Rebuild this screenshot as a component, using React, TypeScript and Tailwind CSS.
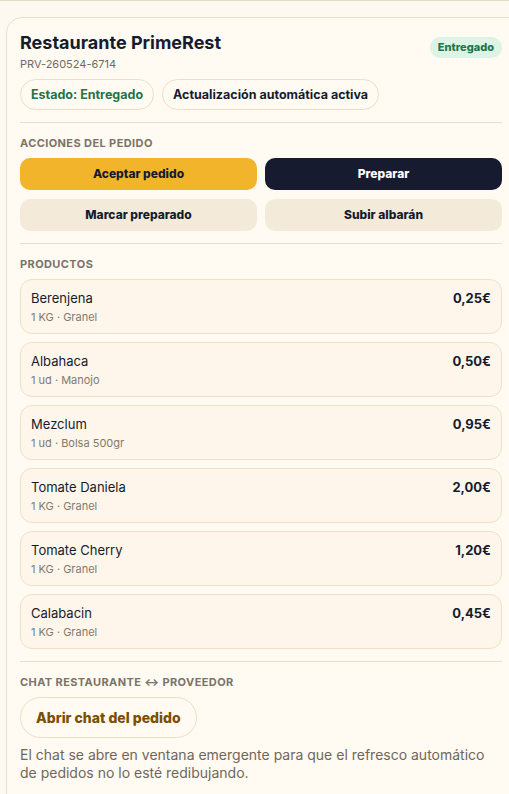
import React from 'react';

const products = [
  { name: 'Berenjena', detail: '1 KG · Granel', price: '0,25€' },
  { name: 'Albahaca', detail: '1 ud · Manojo', price: '0,50€' },
  { name: 'Mezclum', detail: '1 ud · Bolsa 500gr', price: '0,95€' },
  { name: 'Tomate Daniela', detail: '1 KG · Granel', price: '2,00€' },
  { name: 'Tomate Cherry', detail: '1 KG · Granel', price: '1,20€' },
  { name: 'Calabacin', detail: '1 KG · Granel', price: '0,45€' },
];

export default function App() {
  return (
    <div
      className="h-[794px] w-[509px] overflow-hidden bg-[#fdf8f0] border-t border-[#e9dcc4] font-['Inter','Noto_Sans',sans-serif] text-[#161b2e]"
    >
      <div className="ml-[6px] mt-[16px] w-[510px] rounded-tl-[16px] border border-[#eadfca] bg-[#fffaf2] px-[13px] pt-[13px] pb-6">
        {/* header */}
        <div className="flex items-start justify-between">
          <div>
            <h1 className="text-[18px] font-bold leading-[24px]">Restaurante PrimeRest</h1>
            <p className="mt-[2px] text-[11px] leading-[14px] text-[#6f6a63]">PRV-260524-6714</p>
          </div>
          <span className="mt-[6px] rounded-full bg-[#dcf3e6] px-[8px] py-[4px] text-[11px] font-extrabold leading-[13px] text-[#23734b]">
            Entregado
          </span>
        </div>

        <div className="mt-[8px] flex gap-2">
          <span className="rounded-full border border-[#ecdfc7] px-[10px] py-[7px] text-[12.5px] font-bold leading-[15px] text-[#23734b]">
            Estado: Entregado
          </span>
          <span className="rounded-full border border-[#ecdfc7] px-[10px] py-[7px] text-[12.5px] font-bold leading-[15px]">
            Actualización automática activa
          </span>
        </div>

        <div className="mt-3 border-t border-[#ebdfc9]" />

        {/* acciones */}
        <h2 className="mt-[13px] text-[11px] font-bold uppercase leading-[14px] tracking-[0.4px] text-[#7b7368]">Acciones del pedido</h2>
        <div className="mt-2 grid grid-cols-2 gap-2">
          <button className="h-[32px] rounded-[10px] bg-[#f2b42b] text-[12px] font-extrabold">Aceptar pedido</button>
          <button className="h-[32px] rounded-[10px] bg-[#171b2f] text-[12px] font-extrabold text-white">Preparar</button>
          <button className="mt-[1px] h-[32px] rounded-[10px] bg-[#f3eada] text-[12px] font-extrabold">Marcar preparado</button>
          <button className="mt-[1px] h-[32px] rounded-[10px] bg-[#f3eada] text-[12px] font-extrabold">Subir albarán</button>
        </div>

        <div className="mt-3 border-t border-[#ebdfc9]" />

        {/* productos */}
        <h2 className="mt-[13px] text-[11px] font-bold uppercase leading-[14px] tracking-[0.4px] text-[#7b7368]">Productos</h2>
        <div className="mt-2 flex flex-col gap-2">
          {products.map((p) => (
            <div
              key={p.name}
              className="flex h-[55px] items-start justify-between rounded-[12px] border border-[#f0e1c6] bg-[#fef6ea] px-[10px] pt-[10px]"
            >
              <div>
                <p className="text-[13px] leading-[17px]">{p.name}</p>
                <p className="mt-[3px] text-[11px] leading-[14px] text-[#817a70]">{p.detail}</p>
              </div>
              <p className="text-[13px] font-bold leading-[17px]">{p.price}</p>
            </div>
          ))}
        </div>

        <div className="mt-3 border-t border-[#ebdfc9]" />

        {/* chat */}
        <h2 className="mt-[13px] text-[11px] font-bold uppercase leading-[14px] tracking-[0.4px] text-[#7b7368]">
          Chat restaurante ↔ proveedor
        </h2>
        <button className="mt-2 h-[41px] rounded-full border border-[#ecdfc7] px-[15px] text-[14px] font-extrabold text-[#7a5000]">
          Abrir chat del pedido
        </button>
        <p className="mt-[8px] w-[482px] text-[14px] leading-[18px] text-[#6f675d]">
          El chat se abre en ventana emergente para que el refresco automático de pedidos no lo esté redibujando.
        </p>
      </div>
    </div>
  );
}
